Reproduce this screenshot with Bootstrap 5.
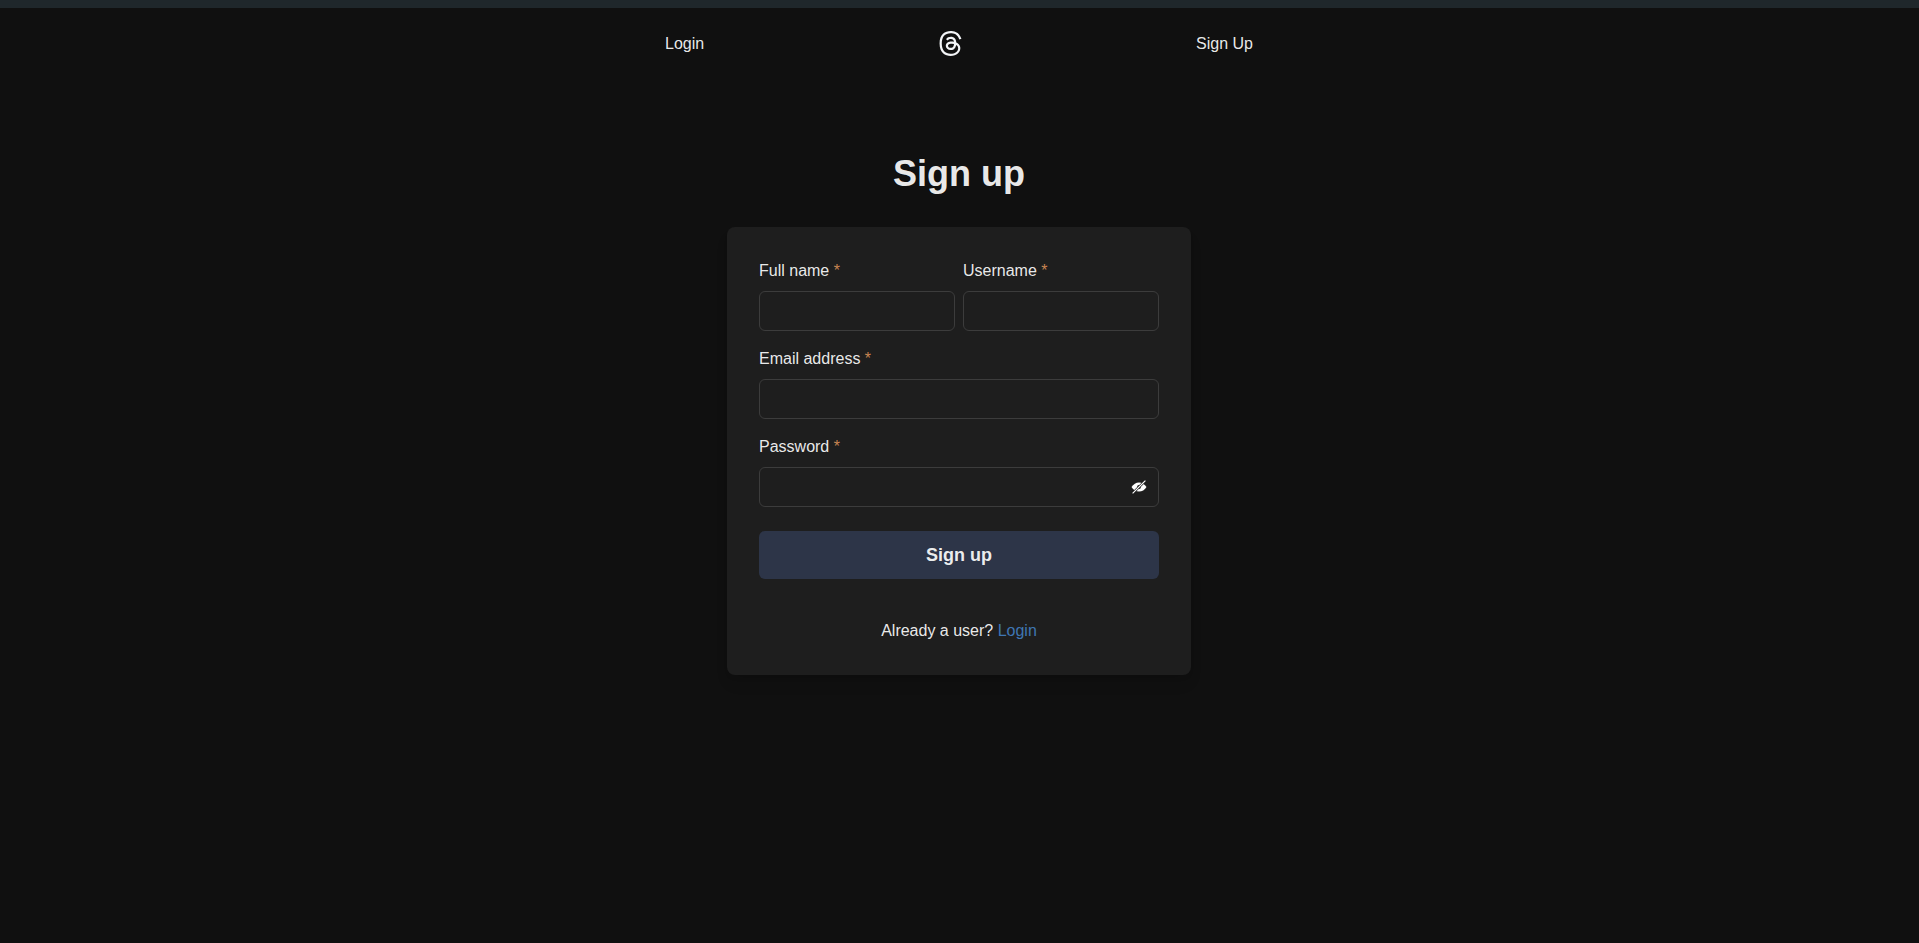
<!doctype html>
<html lang="en">
<head>
<meta charset="utf-8">
<title>Sign up</title>
<link href="https://cdn.jsdelivr.net/npm/bootstrap@5.3.0/dist/css/bootstrap.min.css" rel="stylesheet">
<style>
html, body { height: 100%; }
body { background: #101010; color: rgba(255,255,255,.92); font-family: "Liberation Sans", Arial, sans-serif; font-size: 16px; line-height: 24px; }
.topstrip { height: 8px; background: #1f272b; }
.pageframe { padding-right: 1px; }
.topnav { width: 588px; margin: 23px auto 0; height: 25px; }
.topnav a { color: rgba(255,255,255,.92); text-decoration: none; font-size: 16px; line-height: 24px; }
.threadmark { width: 25px; height: 25px; display: block; fill: #f3f5f7; }
.pagehead { font-size: 36px; line-height: 43px; font-weight: 700; text-align: center; margin: 0; padding-top: 96px; margin-bottom: 32px; color: rgba(255,255,255,.92); }
.formpanel { width: 464px; margin: 0 auto; background: #1e1e1e; border-radius: 8px; padding: 32px; box-shadow: 0 10px 15px -3px rgba(0,0,0,.1), 0 4px 6px -2px rgba(0,0,0,.05); }
.fieldgap { gap: 8px; }
.fieldcol { flex: 1 1 0; min-width: 0; }
.fieldrow { margin-bottom: 16px; }
.fieldlabel { display: block; margin-bottom: 8px; font-size: 16px; line-height: 24px; }
.reqstar { color: #c98552; }
.darkinput { height: 40px; background: transparent; border: 1px solid #3c3c3c; border-radius: 6px; color: #fff; padding: 0 16px; }
.darkinput:focus { background: transparent; color: #fff; border-color: #3c3c3c; box-shadow: none; }
.eyetoggle { position: absolute; top: 0; right: 0; width: 40px; height: 40px; padding: 0; border: 0; background: none; display: flex; align-items: center; justify-content: center; }
.eyetoggle svg { width: 18px; height: 18px; }
.submitbtn { display: block; width: 100%; height: 48px; margin-top: 24px; background: #2d3548; border: 0; border-radius: 6px; color: rgba(255,255,255,.92); font-size: 18px; font-weight: 700; line-height: 24px; }
.submitbtn:hover { background: #2d3548; color: rgba(255,255,255,.92); }
.loginline { text-align: center; margin: 40px 0 0; }
.loginline a { color: #3f76b4; text-decoration: none; }
</style>
</head>
<body>
<div class="topstrip"></div>
<div class="pageframe">
<nav class="topnav d-flex justify-content-between align-items-center">
  <a href="#">Login</a>
  <svg class="threadmark" viewBox="0 0 16 16" aria-label="Threads"><path d="M6.321 6.016c-.27-.18-1.166-.802-1.166-.802.756-1.081 1.753-1.502 3.132-1.502.975 0 1.803.327 2.394.948s.928 1.509 1.005 2.644q.492.207.905.484c1.109.745 1.719 1.86 1.719 3.137 0 2.716-2.226 5.075-6.256 5.075C4.594 16 1 13.987 1 7.994 1 2.034 4.482 0 8.044 0 9.69 0 13.55.243 15 5.036l-1.36.353C12.516 1.974 10.163 1.43 8.006 1.43c-3.565 0-5.582 2.171-5.582 6.79 0 4.143 2.254 6.343 5.63 6.343 2.777 0 4.847-1.443 4.847-3.556 0-1.438-1.208-2.127-1.27-2.127-.236 1.234-.868 3.31-3.644 3.31-1.618 0-3.013-1.118-3.013-2.582 0-2.09 1.984-2.847 3.55-2.847.586 0 1.294.04 1.663.114 0-.637-.54-1.728-1.9-1.728-1.25 0-1.566.405-1.967.868ZM8.716 8.19c-2.04 0-2.304.87-2.304 1.416 0 .878 1.043 1.168 1.6 1.168 1.02 0 2.067-.282 2.232-2.423a6.2 6.2 0 0 0-1.528-.161"/></svg>
  <a href="#">Sign Up</a>
</nav>
<main>
  <h1 class="pagehead">Sign up</h1>
  <form class="formpanel">
    <div class="d-flex fieldgap fieldrow">
      <div class="fieldcol">
        <label class="fieldlabel" for="fn">Full name <span class="reqstar">*</span></label>
        <input id="fn" class="form-control darkinput" type="text">
      </div>
      <div class="fieldcol">
        <label class="fieldlabel" for="un">Username <span class="reqstar">*</span></label>
        <input id="un" class="form-control darkinput" type="text">
      </div>
    </div>
    <div class="fieldrow">
      <label class="fieldlabel" for="em">Email address <span class="reqstar">*</span></label>
      <input id="em" class="form-control darkinput" type="email">
    </div>
    <div>
      <label class="fieldlabel" for="pw">Password <span class="reqstar">*</span></label>
      <div class="position-relative">
        <input id="pw" class="form-control darkinput" type="password">
        <button type="button" class="eyetoggle" aria-label="Show password">
          <svg viewBox="0 0 18 18">
            <path d="M1.5 9C3.4 6.1 5.9 4.4 9 4.4s5.6 1.7 7.5 4.6c-1.9 2.9-4.4 4.6-7.5 4.6S3.4 11.900 1.500 9z" fill="#fff"/>
            <circle cx="9" cy="9" r="1.900" fill="#1e1e1e"/>
            <path d="M2.600 15.400 15.400 2.600" stroke="#1e1e1e" stroke-width="2.400"/>
            <path d="M2.600 15.400 15.400 2.600" stroke="#fff" stroke-width="1.200"/>
          </svg>
        </button>
      </div>
    </div>
    <button type="button" class="btn submitbtn">Sign up</button>
    <p class="loginline">Already a user? <a href="#">Login</a></p>
  </form>
</main>
</div>
<script src="https://cdn.jsdelivr.net/npm/bootstrap@5.3.0/dist/js/bootstrap.bundle.min.js"></script>
</body>
</html>
